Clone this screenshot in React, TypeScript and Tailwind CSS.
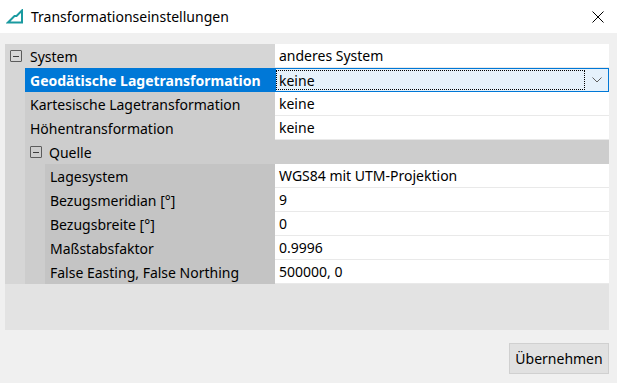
import React from "react";

type Row = {
  level: number;
  label: string;
  value?: string;
  expand?: boolean;
  category?: boolean;
  selected?: boolean;
};

const ROWS: Row[] = [
  { level: 0, label: "System", value: "anderes System", expand: true },
  { level: 1, label: "Geodätische Lagetransformation", value: "keine", selected: true },
  { level: 1, label: "Kartesische Lagetransformation", value: "keine" },
  { level: 1, label: "Höhentransformation", value: "keine" },
  { level: 1, label: "Quelle", category: true, expand: true },
  { level: 2, label: "Lagesystem", value: "WGS84 mit UTM-Projektion" },
  { level: 2, label: "Bezugsmeridian [°]", value: "9" },
  { level: 2, label: "Bezugsbreite [°]", value: "0" },
  { level: 2, label: "Maßstabsfaktor", value: "0.9996" },
  { level: 2, label: "False Easting, False Northing", value: "500000, 0" },
];

function ExpandBox() {
  return (
    <div className="flex h-[12px] w-[12px] items-center justify-center rounded-[1px] border border-[#5c5c5c]">
      <div className="h-px w-[6px] bg-[#3c3c3c]" />
    </div>
  );
}

function AppIcon() {
  return (
    <svg width="18" height="16" viewBox="0 0 18 16" fill="none">
      <path
        d="M16 1.5 L10.5 7 L8.5 7 L2 13.5 L16 13.5 Z"
        stroke="#1a9aa0"
        strokeWidth="2"
        strokeLinejoin="miter"
      />
    </svg>
  );
}

function PropertyRow({ row }: { row: Row }) {
  if (row.category) {
    return (
      <div className="flex h-[24px]">
        <div className="w-[20px] bg-[#d6d6d6]" />
        <div className="flex flex-1 items-center bg-[#cdcdcd] pl-[5px]">
          <ExpandBox />
          <span className="ml-[7px] text-black">{row.label}</span>
        </div>
      </div>
    );
  }

  const labelBg =
    row.level === 0 ? "bg-[#d6d6d6]" : row.level === 1 ? "bg-[#cdcdcd]" : "bg-[#c4c4c4]";

  return (
    <div className="flex h-[24px]">
      {row.level >= 1 && <div className="w-[20px] shrink-0 bg-[#d6d6d6]" />}
      {row.level >= 2 && <div className="w-[20px] shrink-0 bg-[#cdcdcd]" />}
      {row.level === 0 ? (
        <div className={`flex flex-1 items-center ${labelBg} pl-[5px]`}>
          <ExpandBox />
          <span className="ml-[8px] text-black">{row.label}</span>
        </div>
      ) : row.selected ? (
        <div className="flex flex-1 items-center bg-[#0078d7] pl-[5px]">
          <span className="font-bold text-white">{row.label}</span>
        </div>
      ) : (
        <div className={`flex flex-1 items-center ${labelBg} pl-[5px]`}>
          <span className="text-black">{row.label}</span>
        </div>
      )}
      {row.selected ? (
        <div className="flex w-[334px] shrink-0 items-stretch border border-[#0078d7] bg-[#e5f1fb]">
          <div className="my-px flex flex-1 items-center border border-dotted border-black pl-[2px] text-black">
            {row.value}
          </div>
          <div className="flex w-[23px] items-center justify-center">
            <svg width="10" height="6" viewBox="0 0 10 6" fill="none">
              <path d="M0.5 0.5 L5 5 L9.5 0.5" stroke="#606060" strokeWidth="1" />
            </svg>
          </div>
        </div>
      ) : (
        <div className="flex w-[334px] shrink-0 items-center border-b border-[#e9e9e9] bg-white pl-[4px] text-black">
          {row.value}
        </div>
      )}
    </div>
  );
}

export default function App() {
  return (
    <div
      className="flex h-[383px] w-[617px] flex-col overflow-hidden bg-[#f0f0f0] text-[14px]"
      style={{ fontFamily: '"Noto Sans", "Open Sans", sans-serif' }}
    >
      {/* TITLE BAR */}
      <div className="flex h-[33px] items-center bg-white pl-[6px] pr-[13px]">
        <AppIcon />
        <span className="ml-[7px] text-black">Transformationseinstellungen</span>
        <div className="flex-1" />
        <svg width="12" height="12" viewBox="0 0 12 12">
          <path d="M0.5 0.5 L11.5 11.5 M11.5 0.5 L0.5 11.5" stroke="#000" strokeWidth="1" />
        </svg>
      </div>

      {/* PROPERTY GRID */}
      <div className="pl-[5px] pr-[8px] pt-[11px]">
        <div className="flex flex-col">
          {ROWS.map((row, i) => (
            <PropertyRow key={i} row={row} />
          ))}
          <div className="h-[46px] bg-[#e3e3e3]" />
        </div>
      </div>

      {/* ACTIONS */}
      <div className="flex justify-end pr-[8px] pt-[13px]">
        <button className="h-[31px] w-[100px] border border-[#d0d0d0] bg-[#e1e1e1] text-black">
          Übernehmen
        </button>
      </div>
    </div>
  );
}
